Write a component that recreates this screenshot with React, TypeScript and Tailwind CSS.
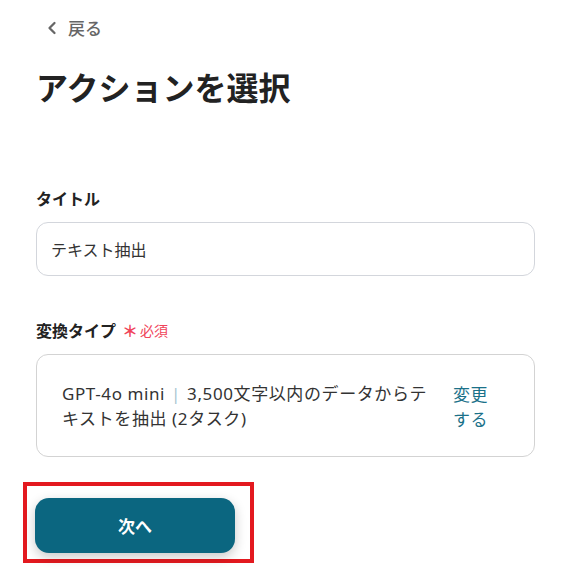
import { ChevronLeft } from 'lucide-react'

export default function App() {
  return (
    <div
      className="min-h-[572px] w-[562px] bg-white pl-[36px] pr-[27px] pt-[16px] text-[#222]"
      style={{ fontFamily: '"Noto Sans CJK JP", "Noto Sans", sans-serif' }}
    >
      {/* 戻る */}
      <div className="flex h-[24px] items-center gap-[6px] pl-[6px] text-[17px] font-medium text-[#666]">
        <ChevronLeft size={20} strokeWidth={2.75} />
        <span>戻る</span>
      </div>

      {/* タイトル */}
      <h1 className="mt-[22px] text-[32px] font-bold leading-[48px] text-[#222]">
        アクションを選択
      </h1>

      <div className="mt-[76px] text-[16px] font-bold leading-[24px]">タイトル</div>
      <div className="mt-[12px] flex h-[54px] items-center rounded-[12px] border border-[#d3d6dc] px-[14px] text-[16px] text-[#333]">
        テキスト抽出
      </div>

      <div className="mt-[42px] flex items-center text-[16px] font-bold leading-[24px]">
        <span>変換タイプ</span>
        <span className="ml-[6px] text-[16px] font-bold text-[#f0445a]">＊</span>
        <span className="ml-[2px] text-[14px] font-normal text-[#f0445a]">必須</span>
      </div>
      <div className="mt-[12px] flex h-[103px] items-center rounded-[12px] border border-[#d3d3d3] pl-[25px]">
        <div
          className="w-[372px] text-[17px] leading-[25px] tracking-[0.6px] text-[#333]"
          style={{ fontFamily: '"Noto Sans", "Noto Sans CJK JP", sans-serif' }}
        >
          GPT-4o mini<span className="mx-[6px] text-[#a9c4d2]">|</span>3,500文字以内のデータからテキストを抽出 (2タスク)
        </div>
        <div className="ml-[19px] w-[36px] text-[17px] leading-[25px] tracking-[0.6px] text-[#1b7189]">変更する</div>
      </div>

      {/* 次へ */}
      <div className="ml-[-13px] mt-[25px] w-[231px] border-[4px] border-[#e3191f] pb-[6px] pl-[8px] pr-[9px] pt-[12px]">
        <button className="flex h-[55px] w-[200px] items-center justify-center rounded-[14px] bg-[#0b6680] text-[17px] font-bold text-white shadow-[0_4px_12px_rgba(0,0,0,0.22)]">
          次へ
        </button>
      </div>
    </div>
  )
}
